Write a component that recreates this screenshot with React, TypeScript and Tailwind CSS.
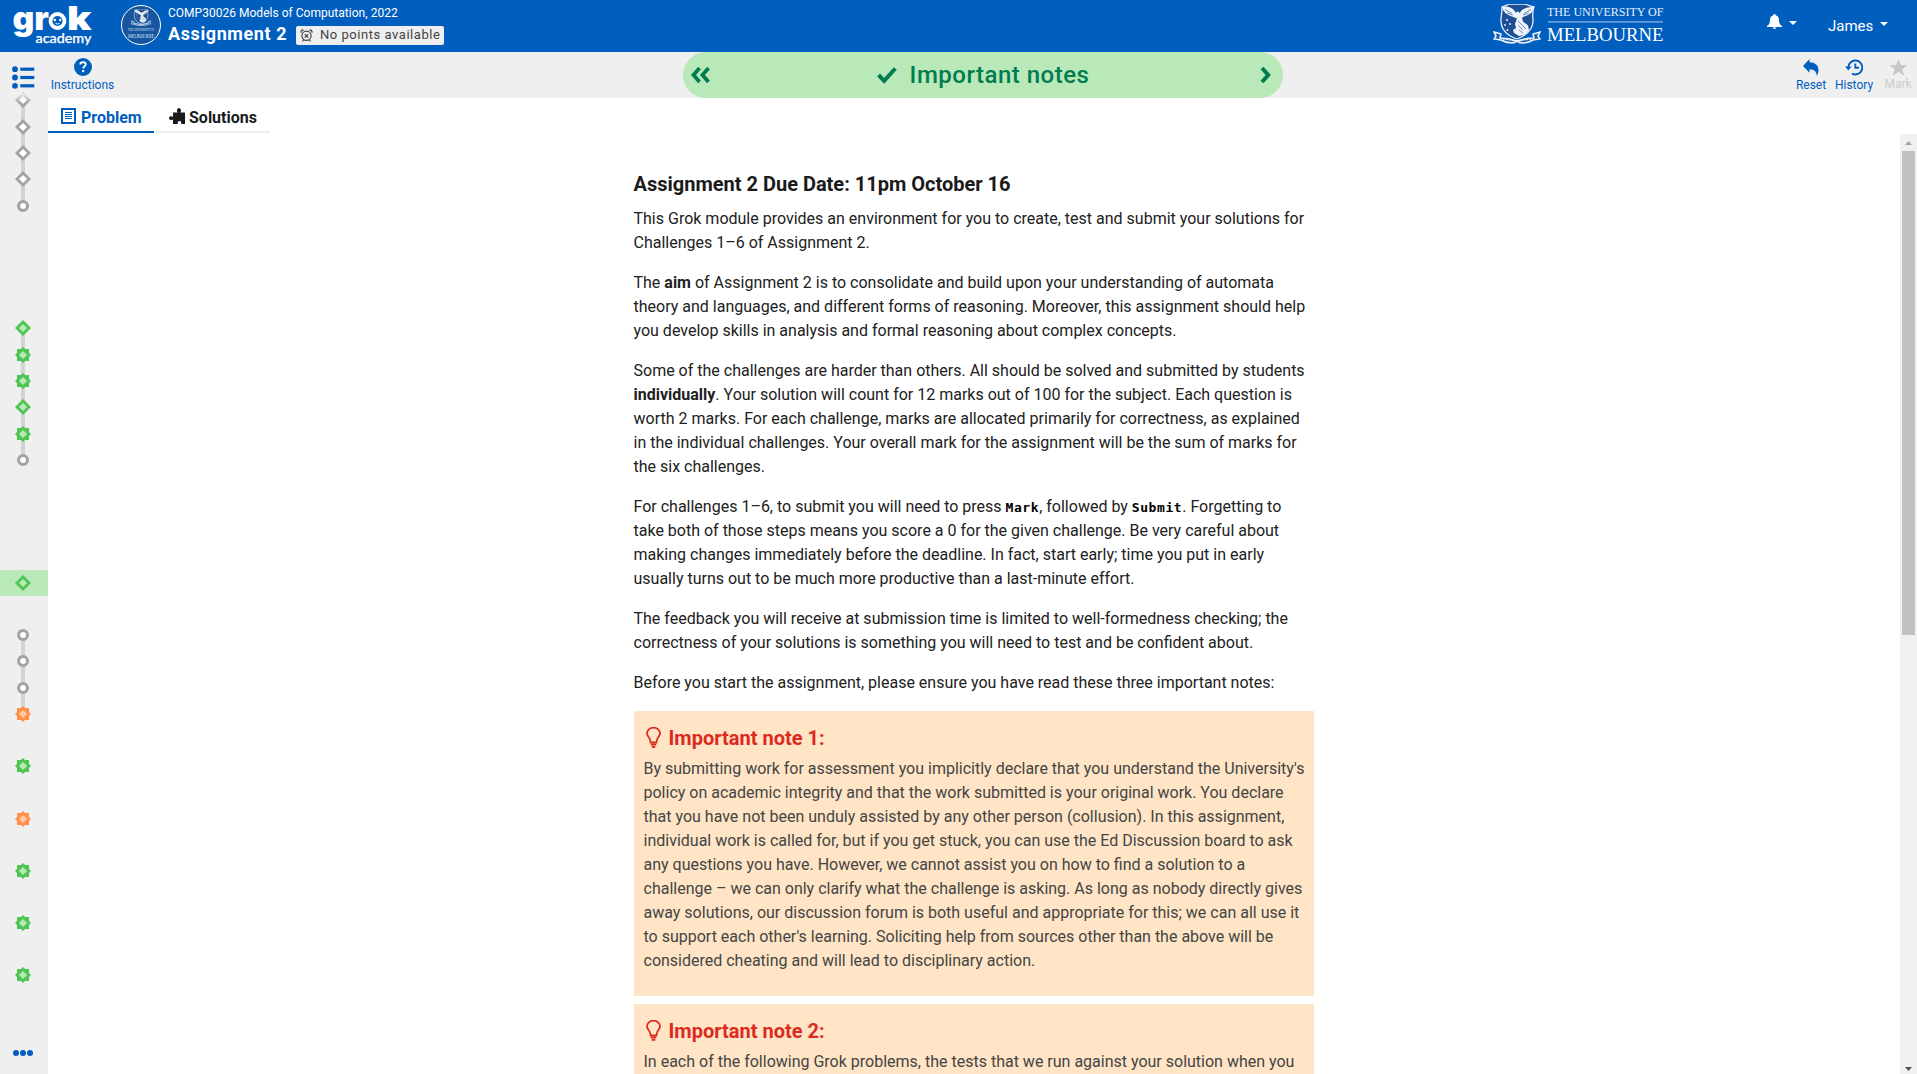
import React from "react";

const GREEN = "#4fc653";
const ORANGE = "#ff8f4a";

type Kind = "diamond" | "circle" | "star";
type Tone = "grey" | "green" | "orange";

const tones: Record<Tone, { edge: string; fill: string }> = {
  grey: { edge: "#a3a3a3", fill: "#ffffff" },
  green: { edge: GREEN, fill: "#b9e8b9" },
  orange: { edge: ORANGE, fill: "#ffc9a3" },
};

function Marker({ kind, tone }: { kind: Kind; tone: Tone }) {
  const { edge, fill } = tones[tone];
  return (
    <svg className="relative block size-4" viewBox="0 0 16 16">
      {kind === "circle" ? (
        <circle cx="8" cy="8" r="4.5" fill={fill} stroke={edge} strokeWidth="3" />
      ) : (
        <>
          {kind === "star" && <rect x="2" y="2" width="12" height="12" fill={edge} />}
          <path d="M8 0l8 8-8 8-8-8z" fill={edge} />
          <path d="M8 3.9l4.1 4.1-4.1 4.1-4.1-4.1z" fill={fill} />
        </>
      )}
    </svg>
  );
}

type Item = [Kind, Tone];
const groupA: Item[] = [["diamond", "grey"], ["diamond", "grey"], ["diamond", "grey"], ["diamond", "grey"], ["circle", "grey"]];
const groupB: Item[] = [["diamond", "green"], ["star", "green"], ["star", "green"], ["diamond", "green"], ["star", "green"], ["circle", "grey"]];
const groupC: Item[] = [["circle", "grey"], ["circle", "grey"], ["circle", "grey"], ["star", "orange"]];
const singles: Tone[] = ["green", "orange", "green", "green", "green"];

function Track({ items }: { items: Item[] }) {
  return (
    <div className="relative w-full">
      <div className="absolute top-3 bottom-3 left-[21px] w-1 bg-[#d3d3d3]" />
      {items.map(([k, t], i) => (
        <div key={i} className="flex h-[26.35px] items-center pl-[15px]">
          <Marker kind={k} tone={t} />
        </div>
      ))}
    </div>
  );
}

function Sidebar() {
  return (
    <aside className="flex w-12 shrink-0 flex-col bg-[#efefef]">
      <div className="flex h-[35px] shrink-0 items-end pl-3">
        <svg className="-mb-[2px] h-[24px] w-[23px]" viewBox="0 0 23 24" fill="#005ebf">
          <circle cx="3" cy="4.2" r="2.9" /><circle cx="3" cy="12.5" r="2.9" /><circle cx="3" cy="20.8" r="2.9" />
          <rect x="8.3" y="2.6" width="14" height="3.2" /><rect x="8.3" y="10.9" width="14" height="3.2" /><rect x="8.3" y="19.2" width="14" height="3.2" />
        </svg>
      </div>
      <div className="relative">
        <Track items={groupA} />
        <div className="absolute top-[6px] left-0 h-2.5 w-12 bg-gradient-to-b from-[#efefef] to-transparent" />
      </div>
      <div className="h-[96.3px]" />
      <Track items={groupB} />
      <div className="h-[96.7px]" />
      <div className="flex h-[26px] items-center bg-[#b9e8b9] pl-[15px]"><Marker kind="diamond" tone="green" /></div>
      <div className="h-[26px]" />
      <Track items={groupC} />
      {singles.map((t, i) => (
        <div key={i} className="flex h-[52.2px] items-end pb-[5px] pl-[15px]"><Marker kind="star" tone={t} /></div>
      ))}
      <div className="mt-auto flex h-[24px] shrink-0 items-start gap-[1px] pl-[13px]">
        {[0, 1, 2].map((i) => <span key={i} className="size-1.5 rounded-full bg-[#005ebf]" />)}
      </div>
    </aside>
  );
}

function GrokLogo() {
  return (
    <svg className="h-[46px] w-[82px] overflow-visible" viewBox="12 2 82 46" fill="#fff">
      <text x="12.5" y="29.500" fontSize="33" fontWeight="900" fontFamily="Inter, sans-serif" textLength="36.500" lengthAdjust="spacingAndGlyphs">gr</text>
      <circle cx="57.5" cy="21" r="7" fill="none" stroke="#fff" strokeWidth="3.8" />
      <circle cx="54.8" cy="20" r="1.2" /><circle cx="60.2" cy="20" r="1.2" />
      <path d="M55.500 23.300q2 1.500 4 0" fill="none" stroke="#fff" strokeWidth="1" />
      <text x="67" y="30" fontSize="33" fontWeight="900" fontFamily="Inter, sans-serif" textLength="24.500" lengthAdjust="spacingAndGlyphs">k</text>
      <text x="35.5" y="42.500" fontSize="14" fontFamily="Lato, sans-serif" fontWeight="500" stroke="#fff" strokeWidth=".25" textLength="56" lengthAdjust="spacingAndGlyphs">academy</text>
    </svg>
  );
}

function Crest({ className }: { className: string }) {
  return (
    <svg className={className} viewBox="0 0 48 40">
      <path d="M9 3q4-1 7-3h16q4 2 9 3-2 5-1 12 1 13-16 20Q7 29 8 15q1-7 1-12z" fill="#1c4f94" stroke="#e9eff8" strokeWidth="1.3" />
      <path d="M9 3q7-2 12 3l2 3 1.500-2 2 2Q31 2 41 3q-1 6-6 8l-6 2.500 1 4 5 4 1 5-4 4-6 1.500-5-3-1-3 3-2-1-4 2-5.500-5-2Q10 9.500 9 3z" fill="#eef3fa" />
      <path d="M12 5.500l7 4M14 9l6 2M38 5.500l-7 4M36 9l-6 2M25 17l4 4M25 21l5 5M29 21l4 4M26 26l4 3" stroke="#5c84b8" strokeWidth=".9" fill="none" />
      <g fill="#dfe8f4"><circle cx="14" cy="16" r="1.100" /><circle cx="12" cy="21" r="1" /><circle cx="17" cy="20" r="1" /><circle cx="14.500" cy="26" r="1.100" /></g>
      <path d="M1 28l7 2-1 4q8 0 17 3 9-3 17-3l-1-4 7-2-2 4 2 3-7 1q-5 3-11 3-3 0-5-2-2 2-5 2-6 0-11-3l-7-1 2-3z" fill="#1c5fae" stroke="#eef3fa" strokeWidth="1.500" />
      <path d="M10 35q7 0 14 3 7-3 14-3" stroke="#eef3fa" strokeWidth="1.600" fill="none" strokeDasharray="2 1" />
    </svg>
  );
}

function Caret() {
  return <svg className="h-1 w-2" viewBox="0 0 8 4"><path d="M0 0h8L4 4z" fill="#fff" /></svg>;
}

function Header() {
  return (
    <header className="flex h-[52px] shrink-0 bg-[#005ebf] text-white">
      <div className="w-[92px] pt-[2px] pl-3"><GrokLogo /></div>
      <div className="mt-[5px] ml-[29px] flex size-10 flex-col items-center rounded-full border border-white bg-[#17569f]">
        <Crest className="mt-[3px] h-[17px] w-[22px]" />
        <svg className="h-[14px] w-[30px] overflow-visible" viewBox="0 0 30 14" fill="#dbe6f4" fontFamily="Liberation Serif, serif">
          <text x="2" y="5" fontSize="4" textLength="26" lengthAdjust="spacingAndGlyphs">THE UNIVERSITY OF</text>
          <text x="2" y="11.5" fontSize="6" textLength="26" lengthAdjust="spacingAndGlyphs">MELBOURNE</text>
        </svg>
      </div>
      <div className="ml-[7px] flex flex-col pt-[5px] whitespace-nowrap">
        <div className="h-[16px] text-[12px] leading-4 tracking-[0.02px]">COMP30026 Models of Computation, 2022</div>
        <div className="flex h-6 items-center">
          <span className="w-[128px] pt-[2px] text-[18px] leading-6 font-bold tracking-[0.6px]">Assignment 2</span>
          <span className="mt-[5px] flex h-[19px] w-[148px] items-center rounded-[2px] bg-[#efefef] pl-1 text-[#444]">
            <svg className="mr-[7px] size-[13px]" viewBox="0 0 13 13" fill="none" stroke="#444" strokeWidth="1.2">
              <circle cx="6.500" cy="6.800" r="4.600" /><path d="M.8 3.600Q1 1 3.600.9M12.200 3.600Q12 1 9.400.9M2.500 12.500l1-1.500M10.500 12.500l-1-1.500M4.800 5.100l3.400 3.400M8.200 5.100L4.800 8.500" />
            </svg>
            <span className="text-[13px] leading-[17px] tracking-[0.54px] pb-[2px]">No points available</span>
          </span>
        </div>
      </div>
      <div className="ml-auto flex w-[424px]">
        <Crest className="mt-1 h-10 w-12" />
        <svg className="mt-[5px] ml-[6px] h-[40px] w-[118px] overflow-visible" viewBox="0 0 118 40" fill="#fff" fontFamily="Liberation Serif, serif">
          <text x="0" y="11.200" fontSize="13.500" textLength="116.500" lengthAdjust="spacingAndGlyphs" fill="#e6effa">THE UNIVERSITY OF</text>
          <rect x="1" y="16.300" width="115" height="1.200" fill="#8fbaea" />
          <text x="0" y="35.800" fontSize="19.500" textLength="116.500" lengthAdjust="spacingAndGlyphs">MELBOURNE</text>
        </svg>
        <div className="ml-[102px] flex items-start gap-[7px] pt-[14px]">
          <svg className="h-[15px] w-[15px]" viewBox="0 0 15 15" fill="#fff"><path d="M7.500 0q1.200 0 1.200 1.300Q12 2.200 12 6q0 4.500 3 6v1H0v-1q3-1.500 3-6 0-3.800 3.300-4.700Q6.300 0 7.500 0zM5.800 13.500h3.400Q9 15 7.500 15t-1.700-1.500z" /></svg>
          <span className="flex pt-[7px]"><Caret /></span>
        </div>
        <div className="ml-[31px] flex h-[51px] items-center"><span className="w-[52px] pt-[1px] text-[15px]">James</span><span className="flex pb-[3px]"><Caret /></span></div>
      </div>
    </header>
  );
}

function Toolbar() {
  return (
    <div className="flex h-[46px] shrink-0 bg-[#efefef] text-[12px] leading-[14px] text-[#005ebf]">
      <div className="flex w-[635px] flex-col items-start pt-[6px] pl-[3px]">
        <div className="flex w-[63px] flex-col items-center">
          <svg className="size-[18px]" viewBox="0 0 18 18"><circle cx="9" cy="9" r="9" fill="#005ebf" /><path d="M6.300 6.600Q6.300 4.300 9 4.300t2.700 2.200c0 1.900-2.500 1.800-2.500 4" fill="none" stroke="#fff" strokeWidth="1.900" /><rect x="8.100" y="12" width="2.100" height="2.100" fill="#fff" /></svg>
          <span className="mt-[2px]">Instructions</span>
        </div>
      </div>
      <div className="flex h-[46px] w-[600px] items-center rounded-full bg-[#b9e8b9] pr-[12px] pl-[8px] text-[#007c50]">
        <svg className="h-4 w-[19px]" viewBox="0 0 19 16" fill="none" stroke="#007c50" strokeWidth="3.800"><path d="M8.500 1L2.500 8l6 7M17.500 1l-6 7 6 7" /></svg>
        <div className="flex flex-1 items-center justify-center pr-[4px]">
          <svg className="mr-[13px] h-[17px] w-[20px]" viewBox="0 0 20 17" fill="none" stroke="#007c50" strokeWidth="4"><path d="M1.500 8l5.700 5.800L18.300 1.500" /></svg>
          <span className="text-[24px] leading-[46px] font-medium tracking-[0.5px]">Important notes</span>
        </div>
        <svg className="h-4 w-[11px]" viewBox="0 0 11 16" fill="none" stroke="#007c50" strokeWidth="4"><path d="M2 1l6.200 7L2 15" /></svg>
      </div>
      <div className="ml-auto flex pt-[7px]">
        <div className="flex w-[38px] flex-col items-center">
          <svg className="h-[17px] w-[16px]" viewBox="0 0 16 17" fill="#005ebf"><path d="M6.500 0v3.300q9 .3 9 8 0 3.200-1.700 5.700 0-6.500-7.300-6.700v3.400L0 7z" /></svg>
          <span className="mt-[2px]">Reset</span>
        </div>
        <div className="mr-[1px] flex w-[48px] flex-col items-center">
          <svg className="h-[17px] w-[18px]" viewBox="0 0 18 17" fill="none" stroke="#005ebf" strokeWidth="1.900"><path d="M3.300 9A7 7 0 1 1 7 14.700M10.300 4.500v4.300h3.700" /><path d="M0 7.500h6.600L3.300 11.500z" fill="#005ebf" stroke="none" /></svg>
          <span className="mt-[2px]">History</span>
        </div>
        <div className="flex w-[38px] flex-col items-center text-[#ccc]">
          <svg className="h-[17px] w-[19px]" viewBox="0 0 19 17" fill="#c8c8c8"><path d="M9.500 0l2.400 6.100 6.600.2-5.200 4 1.900 6.400-5.700-3.700-5.700 3.700 1.900-6.400-5.200-4 6.600-.2z" /></svg>
          <span className="mt-[1px]">Mark</span>
        </div>
      </div>
    </div>
  );
}

function Tabs() {
  return (
    <div className="flex h-[36px] shrink-0 gap-[2px] text-[16px] leading-[26px] font-bold">
      <div className="flex h-[35px] w-[106px] items-center border-b-2 border-[#005ebf] pt-[2px] pl-[13px] text-[#005ebf]">
        <svg className="mr-[5px] h-4 w-[15px]" viewBox="0 0 15 16" fill="none" stroke="#005ebf"><rect x="1" y="1" width="13" height="14" strokeWidth="2" /><path d="M4 4.500h7M4 6.500h7M4 8.500h7M4 10.500h7" /></svg>
        <span className="pt-[4px]">Problem</span>
      </div>
      <div className="flex h-[35px] w-[114px] items-center border-b-2 border-[#efefef] pt-[2px] pl-[13px] text-[#1a1a1a]">
        <svg className="mr-[4px] h-[16px] w-[16px]" viewBox="0 0 16 16" fill="#1a1a1a"><path d="M4 4.500h4.700Q7.500 3.500 8 1.500 8.800.0 10 0t1.900 1.500q.5 2-.7 3H16V16h-3.800q.6-3-1.700-3t-1.700 3H4v-4.800Q3 12.300 1.500 12 0 11.500 0 10.200t1.300-1.900Q3 8 4 9z" /></svg>
        <span className="pt-[4px]">Solutions</span>
      </div>
    </div>
  );
}

function Lines({ rows }: { rows: React.ReactNode[] }) {
  return <>{rows.map((r, i) => <span key={i} className="block h-6">{r}</span>)}</>;
}

function Mono({ children }: { children: string }) {
  return <code className="font-['DejaVu_Sans_Mono',monospace] text-[13px] leading-none font-bold tracking-[0.57px] text-black">{children}</code>;
}

function Note({ title, rows }: { title: string; rows: string[] }) {
  return (
    <section className="mb-2 bg-[#ffe5c6] px-[10px] pb-[23px] text-[#444]">
      <h3 className="flex h-[46px] items-center pt-[7px] text-[20px] font-bold text-[#dc2a1f]">
        <svg className="mr-[8px] ml-[2px] h-[21px] w-[15px]" viewBox="0 0 15 21" fill="none" stroke="#dc2a1f" strokeWidth="1.800">
          <path d="M4.600 15.500Q4.600 12.500 2.600 10 1 8 1 6.500A6.300 5.700 0 0 1 14 6.500Q14 8 12.400 10 10.400 12.500 10.400 15.500zM4.800 17.600h5.400" /><path d="M5.700 19.900h3.600" />
        </svg>
        <span>{title}</span>
      </h3>
      <p><Lines rows={rows} /></p>
    </section>
  );
}

const paragraphs: React.ReactNode[][] = [
  ["This Grok module provides an environment for you to create, test and submit your solutions for", "Challenges 1–6 of Assignment 2."],
  [<>The <b>aim</b> of Assignment 2 is to consolidate and build upon your understanding of automata</>, "theory and languages, and different forms of reasoning. Moreover, this assignment should help", "you develop skills in analysis and formal reasoning about complex concepts."],
  ["Some of the challenges are harder than others. All should be solved and submitted by students", <><b>individually</b>. Your solution will count for 12 marks out of 100 for the subject. Each question is</>, "worth 2 marks. For each challenge, marks are allocated primarily for correctness, as explained", "in the individual challenges. Your overall mark for the assignment will be the sum of marks for", "the six challenges."],
  [<>For challenges 1–6, to submit you will need to press <Mono>Mark</Mono>, followed by <Mono>Submit</Mono>. Forgetting to</>, "take both of those steps means you score a 0 for the given challenge. Be very careful about", "making changes immediately before the deadline. In fact, start early; time you put in early", "usually turns out to be much more productive than a last-minute effort."],
  ["The feedback you will receive at submission time is limited to well-formedness checking; the", "correctness of your solutions is something you will need to test and be confident about."],
  ["Before you start the assignment, please ensure you have read these three important notes:"],
];

const note1 = [
  "By submitting work for assessment you implicitly declare that you understand the University's",
  "policy on academic integrity and that the work submitted is your original work. You declare",
  "that you have not been unduly assisted by any other person (collusion). In this assignment,",
  "individual work is called for, but if you get stuck, you can use the Ed Discussion board to ask",
  "any questions you have. However, we cannot assist you on how to find a solution to a",
  "challenge – we can only clarify what the challenge is asking. As long as nobody directly gives",
  "away solutions, our discussion forum is both useful and appropriate for this; we can all use it",
  "to support each other's learning. Soliciting help from sources other than the above will be",
  "considered cheating and will lead to disciplinary action.",
];

function Article() {
  return (
    <article className="ml-[585.5px] w-[680px] pt-[38px] text-[16px] leading-6 whitespace-nowrap text-[#212121]">
      <h2 className="h-[35px] text-[20px] leading-6 font-bold text-[#1a1a1a]">Assignment 2 Due Date: 11pm October 16</h2>
      {paragraphs.map((rows, i) => <p key={i} className="mb-4"><Lines rows={rows} /></p>)}
      <Note title="Important note 1:" rows={note1} />
      <Note title="Important note 2:" rows={["In each of the following Grok problems, the tests that we run against your solution when you"]} />
    </article>
  );
}

function Scrollbar() {
  return (
    <div className="flex w-[17px] shrink-0 flex-col items-center justify-between bg-[#f1f1f1]">
      <div className="flex flex-col items-center">
        <svg className="size-[17px]" viewBox="0 0 17 17"><path d="M5 11h7L8.500 7z" fill="#a3a3a3" /></svg>
        <div className="h-[484px] w-[13px] bg-[#c1c1c1]" />
      </div>
      <svg className="size-[17px]" viewBox="0 0 17 17"><path d="M5 10h7l-3.500 4z" fill="#505050" /></svg>
    </div>
  );
}

export default function App() {
  return (
    <div className="flex h-[1074px] w-[1917px] flex-col overflow-hidden bg-white font-[Roboto,sans-serif]">
      <Header />
      <div className="flex min-h-0 flex-1">
        <Sidebar />
        <div className="flex min-w-0 flex-1 flex-col">
          <Toolbar />
          <Tabs />
          <div className="flex min-h-0 flex-1">
            <div className="min-w-0 flex-1 overflow-hidden"><Article /></div>
            <Scrollbar />
          </div>
        </div>
      </div>
    </div>
  );
}
